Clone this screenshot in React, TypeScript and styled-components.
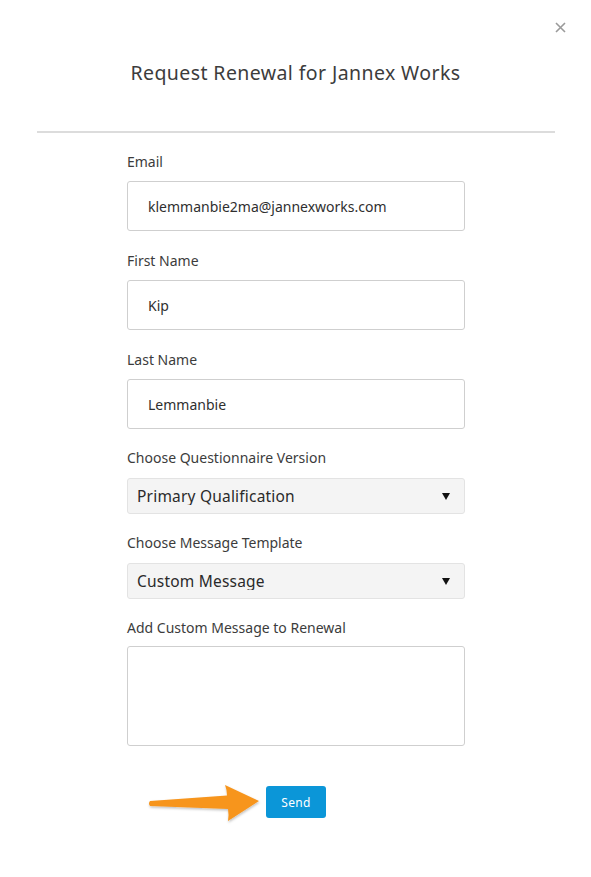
import React from 'react';
import styled, { createGlobalStyle } from 'styled-components';

const GlobalStyle = createGlobalStyle`
  html, body {
    margin: 0;
    padding: 0;
    background: #fff;
  }
  body {
    font-family: 'Noto Sans', 'Open Sans', sans-serif;
    color: #3c3c3c;
  }
`;

const Modal = styled.div`
  width: 591px;
  min-height: 877px;
  box-sizing: border-box;
  padding-top: 13px;
  background: #fff;
`;

const TopBar = styled.div`
  display: flex;
  justify-content: flex-end;
  padding-right: 24px;
  height: 28px;
`;

const CloseButton = styled.button`
  border: none;
  background: none;
  padding: 0;
  width: 14px;
  height: 28px;
  display: flex;
  align-items: center;
  justify-content: center;
  cursor: pointer;
`;

const Title = styled.h1`
  margin: 20px 0 0;
  text-align: center;
  font-size: 19.5px;
  font-weight: 400;
  line-height: 24px;
  letter-spacing: 0.4px;
  color: #3c3c3c;
`;

const Divider = styled.hr`
  margin: 46px 36px 0 37px;
  border: none;
  border-top: 2px solid #dcdcdc;
`;

const Form = styled.form`
  width: 338px;
  margin: 19px 0 0 127px;
  display: flex;
  flex-direction: column;
`;

const Field = styled.div<{ $space?: number }>`
  display: flex;
  flex-direction: column;
  margin-bottom: ${({ $space }) => $space ?? 20}px;
`;

const Label = styled.label<{ $gap?: number }>`
  font-size: 14px;
  line-height: 20px;
  color: #3c3c3c;
  margin-bottom: ${({ $gap }) => $gap ?? 9}px;
`;

const TextInput = styled.div`
  height: 50px;
  box-sizing: border-box;
  border: 1px solid #cfcfcf;
  border-radius: 3px;
  padding: 0 20px;
  display: flex;
  align-items: center;
  font-size: 14px;
  color: #2f2f2f;
  background: #fff;
`;

const Select = styled.div`
  height: 36px;
  box-sizing: border-box;
  border: 1px solid #e3e3e3;
  border-radius: 3px;
  background: #f4f4f4;
  padding: 0 14px 0 9px;
  display: flex;
  align-items: flex-start;
  justify-content: space-between;
`;

const SelectValue = styled.span`
  display: block;
  margin-top: 4px;
  height: 22px;
  overflow: hidden;
  font-size: 15.5px;
  line-height: 26px;
  color: #2a2a2a;
  letter-spacing: 0.2px;
`;

const Caret = styled.span`
  align-self: center;
  width: 0;
  height: 0;
  border-left: 4px solid transparent;
  border-right: 4px solid transparent;
  border-top: 7px solid #111;
`;

const TextArea = styled.div`
  height: 100px;
  box-sizing: border-box;
  border: 1px solid #cfcfcf;
  border-radius: 3px;
  background: #fff;
`;

const ActionRow = styled.div`
  position: relative;
  display: flex;
  justify-content: center;
  margin-top: 20px;
`;

const SendButton = styled.button`
  width: 60px;
  height: 32px;
  border: none;
  border-radius: 3px;
  background: #0b96d8;
  color: #fff;
  font-family: 'Noto Sans', sans-serif;
  font-size: 12px;
  letter-spacing: 0.3px;
  cursor: pointer;
`;

const Pointer = styled.svg`
  position: absolute;
  left: 19px;
  top: -6px;
  overflow: visible;
`;

const textFields = [
  { label: 'Email', value: 'klemmanbie2ma@jannexworks.com' },
  { label: 'First Name', value: 'Kip' },
  { label: 'Last Name', value: 'Lemmanbie' },
];

const selectFields = [
  { label: 'Choose Questionnaire Version', value: 'Primary Qualification' },
  { label: 'Choose Message Template', value: 'Custom Message' },
];

const App = () => {
  return (
    <>
      <GlobalStyle />
      <Modal>
        <TopBar>
          <CloseButton aria-label="Close">
            <svg width="11" height="11" viewBox="0 0 11 11">
              <path d="M1 1 L10 10 M10 1 L1 10" stroke="#9a9a9a" strokeWidth="1.6" />
            </svg>
          </CloseButton>
        </TopBar>
        <Title>Request Renewal for Jannex Works</Title>
        <Divider />
        <Form>
          {textFields.map((f, i) => (
            <Field key={f.label} $space={i === 2 ? 19 : 20}>
              <Label>{f.label}</Label>
              <TextInput>{f.value}</TextInput>
            </Field>
          ))}
          {selectFields.map((f) => (
            <Field key={f.label} $space={19}>
              <Label $gap={10}>{f.label}</Label>
              <Select>
                <SelectValue>{f.value}</SelectValue>
                <Caret />
              </Select>
            </Field>
          ))}
          <Field>
            <Label $gap={8}>Add Custom Message to Renewal</Label>
            <TextArea />
          </Field>
          <ActionRow>
            <Pointer width="114" height="42" viewBox="146 780 114 42">
              <defs>
                <filter id="arrowShadow" x="-10%" y="-20%" width="130%" height="160%">
                  <feDropShadow dx="0.5" dy="1.5" stdDeviation="1.2" floodColor="#000" floodOpacity="0.25" />
                </filter>
              </defs>
              <path
                d="M150 801 L227 795.5 Q227 790 225 785 L259 801 L228 821 Q229 814 228 809 L150 806 Q148 803.5 150 801 Z"
                fill="#f7951d"
                filter="url(#arrowShadow)"
              />
            </Pointer>
            <SendButton type="button">Send</SendButton>
          </ActionRow>
        </Form>
      </Modal>
    </>
  );
};

export default App;
